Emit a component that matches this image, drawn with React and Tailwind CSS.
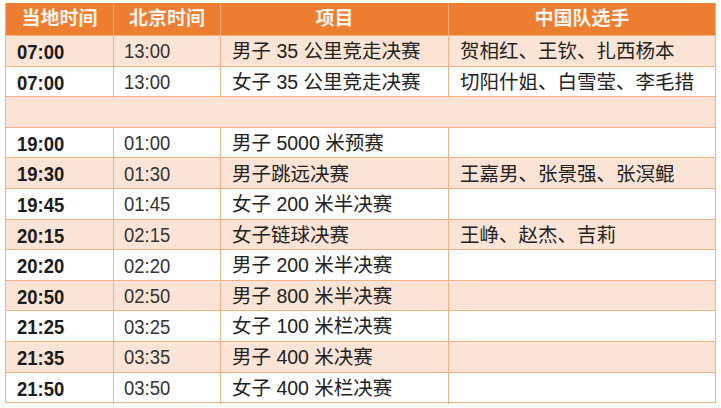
import React from "react";

const rows = [
  { local: "07:00", bj: "13:00", event: "男子 35 公里竞走决赛", players: "贺相红、王钦、扎西杨本" },
  { local: "07:00", bj: "13:00", event: "女子 35 公里竞走决赛", players: "切阳什姐、白雪莹、李毛措" },
  { blank: true },
  { local: "19:00", bj: "01:00", event: "男子 5000 米预赛", players: "" },
  { local: "19:30", bj: "01:30", event: "男子跳远决赛", players: "王嘉男、张景强、张溟鲲" },
  { local: "19:45", bj: "01:45", event: "女子 200 米半决赛", players: "" },
  { local: "20:15", bj: "02:15", event: "女子链球决赛", players: "王峥、赵杰、吉莉" },
  { local: "20:20", bj: "02:20", event: "男子 200 米半决赛", players: "" },
  { local: "20:50", bj: "02:50", event: "男子 800 米半决赛", players: "" },
  { local: "21:25", bj: "03:25", event: "女子 100 米栏决赛", players: "" },
  { local: "21:35", bj: "03:35", event: "男子 400 米决赛", players: "" },
  { local: "21:50", bj: "03:50", event: "女子 400 米栏决赛", players: "" },
];

const font = { fontFamily: '"Liberation Sans", "Noto Sans CJK SC", sans-serif' };

function App() {
  return (
    <div className="w-[721px] h-[408px] bg-white overflow-hidden pt-[3px] pl-[5px]" style={font}>
      <div className="w-[711px] border border-[#f4b183] border-t-0">
        {/* header */}
        <div className="grid grid-cols-[108px_107px_228px_266px] h-[32px] bg-[#ed7d31] text-[#fff3ea] text-[19px] font-bold">
          <div className="flex items-center justify-center border-r border-[#f4a877]">当地时间</div>
          <div className="flex items-center justify-center border-r border-[#f4a877]">北京时间</div>
          <div className="flex items-center justify-center border-r border-[#f4a877]">项目</div>
          <div className="flex items-center justify-center">中国队选手</div>
        </div>

        {rows.map((r, i) => {
          const bg = i % 2 === 0 ? "bg-[#fbe4d5]" : "bg-white";
          if (r.blank) {
            return <div key={i} className={`h-[30.6px] border-t border-[#f4b183] ${bg}`} />;
          }
          return (
            <div
              key={i}
              className={`grid grid-cols-[108px_107px_228px_266px] h-[30.6px] border-t border-[#f4b183] ${bg}`}
            >
              <div className="flex items-center pl-[11px] border-r border-[#f4b183] text-[21px] font-bold text-[#1c1c1c]">
                <span className="inline-block origin-left scale-x-[0.88]">{r.local}</span>
              </div>
              <div className="flex items-center pl-[10px] border-r border-[#f4b183] text-[20.5px] text-[#333]">
                <span className="inline-block origin-left scale-x-[0.9]">{r.bj}</span>
              </div>
              <div className="flex items-center pl-[11px] border-r border-[#f4b183] text-[19.5px] text-[#222] whitespace-nowrap">
                {r.event}
              </div>
              <div className="flex items-center pl-[11px] text-[19.5px] text-[#222] whitespace-nowrap">
                {r.players}
              </div>
            </div>
          );
        })}
      </div>
    </div>
  );
}

export default App;
